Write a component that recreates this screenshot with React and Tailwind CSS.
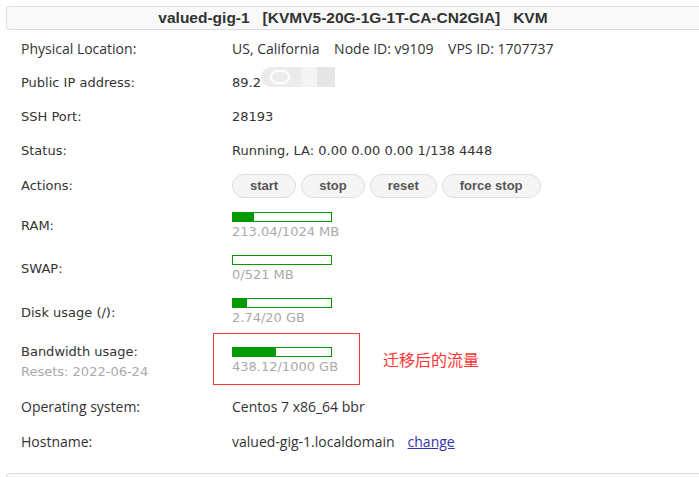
import React from "react";

const seg = { fontFamily: '"Open Sans", "Liberation Sans", sans-serif' };
const ver = { fontFamily: '"DejaVu Sans", Verdana, sans-serif' };

function Bar({ pct }) {
  return (
    <div className="w-[100px] h-[10px] border border-[#009900] bg-white">
      <div className="h-full bg-[#009900]" style={{ width: `${pct}%` }} />
    </div>
  );
}

function Usage({ pct, text }) {
  return (
    <div className="flex flex-col">
      <Bar pct={pct} />
      <div className="text-[13px] leading-[17px] mt-[1px] text-[#aaa]" style={ver}>{text}</div>
    </div>
  );
}

function Btn({ children }) {
  return (
    <button className="h-[24px] px-[17px] rounded-full border border-[#ddd] bg-[#f5f5f5] text-[13px] font-bold text-[#555]"
      style={{ fontFamily: '"Liberation Sans", Arial, sans-serif' }}>
      {children}
    </button>
  );
}

export default function App() {
  return (
    <div className="w-[699px] h-[477px] overflow-hidden bg-white text-[#333]">
      {/* Title bar */}
      <div className="ml-[6px] mt-[6px] h-[24px] border border-r-0 border-[#ddd] rounded-l-[4px] bg-[#f9f9f9] flex items-center justify-center">
        <span className="text-[15.5px] font-bold text-[#333] whitespace-pre" style={{ fontFamily: '"Liberation Sans", Arial, sans-serif' }}>
          valued-gig-1   [KVMV5-20G-1G-1T-CA-CN2GIA]   KVM
        </span>
      </div>

      <div className="pl-[21px] text-[13px]">
        <div className="flex items-center h-[35px] mt-[1px] text-[14px]" style={seg}>
          <div className="w-[211px]">Physical Location:</div>
          <div className="whitespace-pre">US, California    Node ID: v9109    VPS ID: 1707737</div>
        </div>

        <div className="flex items-center h-[34px]" style={ver}>
          <div className="w-[211px]">Public IP address:</div>
          <div className="relative">
            89.2
            <span className="absolute left-[29px] top-[-6px] w-[40px] h-[20px] rounded-l-[10px] bg-[#ececec]" />
            <span className="absolute left-[38px] top-[-3px] w-[20px] h-[14px] rounded-full border-2 border-white" />
            <span className="absolute left-[69px] top-[-6px] w-[16px] h-[20px] bg-[#f4f4f4]" />
            <span className="absolute left-[85px] top-[-6px] w-[18px] h-[20px] bg-[#e6e6e6]" />
          </div>
        </div>

        <div className="flex items-center h-[33px]" style={ver}>
          <div className="w-[211px]">SSH Port:</div>
          <div>28193</div>
        </div>

        <div className="flex items-center h-[35px]" style={ver}>
          <div className="w-[211px]">Status:</div>
          <div>Running, LA: 0.00 0.00 0.00 1/138 4448</div>
        </div>

        <div className="flex items-center h-[36px]" style={ver}>
          <div className="w-[211px]">Actions:</div>
          <div className="flex gap-[5px]">
            <Btn>start</Btn>
            <Btn>stop</Btn>
            <Btn>reset</Btn>
            <Btn>force stop</Btn>
          </div>
        </div>

        <div className="flex items-center h-[44px]" style={ver}>
          <div className="w-[211px]">RAM:</div>
          <Usage pct={21} text="213.04/1024 MB" />
        </div>

        <div className="flex items-center h-[42px]" style={ver}>
          <div className="w-[211px]">SWAP:</div>
          <Usage pct={0} text="0/521 MB" />
        </div>

        <div className="flex items-center h-[43px]" style={ver}>
          <div className="w-[211px] pt-[3px]">Disk usage (/):</div>
          <Usage pct={14} text="2.74/20 GB" />
        </div>

        <div className="flex items-center h-[52px]" style={ver}>
          <div className="w-[192px] flex flex-col leading-[20px] pt-[5px]">
            <span>Bandwidth usage:</span>
            <span className="text-[#aaa]">Resets: 2022-06-24</span>
          </div>
          <div className="w-[147px] h-[52px] border border-[#f33] pl-[18px] pt-[13px]">
            <Usage pct={44} text="438.12/1000 GB" />
          </div>
          <div className="ml-[23px] text-[16px] text-[#f33]" style={{ fontFamily: '"Noto Sans CJK SC", sans-serif' }}>迁移后的流量</div>
        </div>

        <div className="flex items-center h-[42px] text-[14px]" style={seg}>
          <div className="w-[211px]">Operating system:</div>
          <div>Centos 7 x86_64 bbr</div>
        </div>

        <div className="flex items-center h-[28px] text-[14px]" style={seg}>
          <div className="w-[211px]">Hostname:</div>
          <div>
            valued-gig-1.localdomain
            <a href="#" className="ml-[13px] underline text-[#3333aa]">change</a>
          </div>
        </div>
      </div>

      <div className="ml-[6px] mt-[18px] h-[30px] border border-r-0 border-[#ddd] rounded-l-[4px] bg-[#f9f9f9]" />
    </div>
  );
}
